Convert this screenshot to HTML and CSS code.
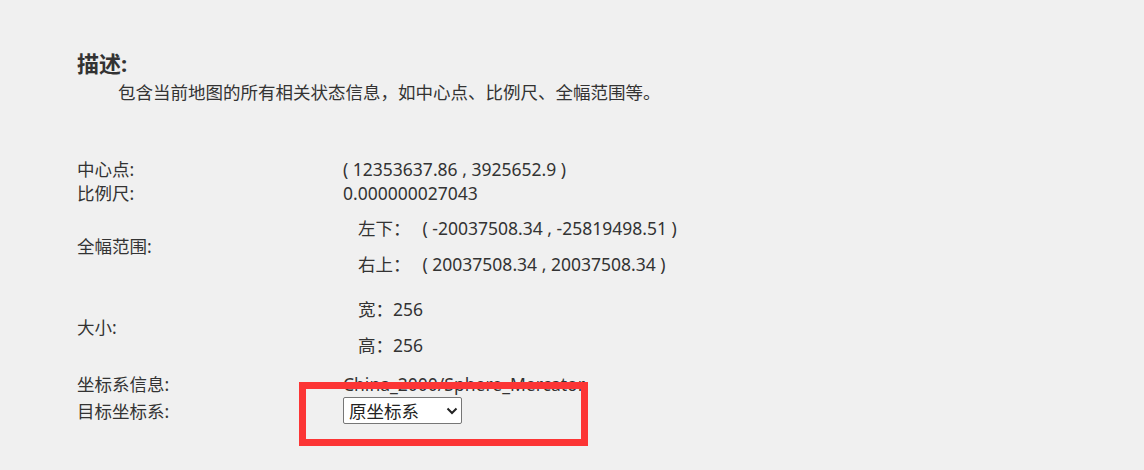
FILE: index.html
```html
<!DOCTYPE html>
<html lang="zh-CN">
  <head>
    <meta charset="utf-8" />
    <title>地图状态</title>
    <link rel="stylesheet" href="styles.css">
  </head>
  <body>
    <div id="container">
      <h3 class="title">描述:</h3>
      <p class="desc">包含当前地图的所有相关状态信息，如中心点、比例尺、全幅范围等。</p>

      <div class="info">
        <div class="row">
          <div class="label">中心点:</div>
          <div class="value">( 12353637.86 , 3925652.9 )</div>
        </div>
        <div class="row">
          <div class="label">比例尺:</div>
          <div class="value">0.000000027043</div>
        </div>
        <div class="row row-tall">
          <div class="label">全幅范围:</div>
          <div class="value">
            <div class="sub">左下：<span class="coord">( -20037508.34 , -25819498.51 )</span></div>
            <div class="sub">右上：<span class="coord">( 20037508.34 , 20037508.34 )</span></div>
          </div>
        </div>
        <div class="row row-tall row-size">
          <div class="label">大小:</div>
          <div class="value">
            <div class="sub">宽：256</div>
            <div class="sub">高：256</div>
          </div>
        </div>
        <div class="row row-prj">
          <div class="label">坐标系信息:</div>
          <div class="value">China_2000/Sphere_Mercator</div>
        </div>
        <div class="row row-target">
          <div class="label">目标坐标系:</div>
          <div class="value">
            <div class="select-wrap">
              <select class="prj-select">
                <option>原坐标系</option>
              </select>
              <svg class="chevron" width="12" height="8" viewBox="0 0 12 8">
                <path d="M1.5 1.5 L6 6 L10.5 1.5" fill="none" stroke="#222" stroke-width="2" />
              </svg>
            </div>
          </div>
        </div>

        <!-- highlight box drawn over the target projection -->
        <div class="highlight"></div>
      </div>
    </div>
  </body>
</html>
```

FILE: styles.css
```css
* {
  box-sizing: border-box;
}

html,
body {
  min-height: 470px;
}

body {
  margin: 0;
  background-color: #f0f0f0;
  color: #333;
  font-family: "Noto Sans", "Noto Sans CJK SC", sans-serif;
  font-size: 17.5px;
}

#container {
  padding: 48px 0 40px 77px;
}

.title {
  margin: 0;
  font-size: 22px;
  line-height: 30px;
  font-weight: bold;
}

.desc {
  margin: 0;
  padding-left: 41px;
  line-height: 28px;
}

.info {
  position: relative;
  margin-top: 51px;
  width: 700px;
}

.row {
  display: flex;
  align-items: center;
  min-height: 24px;
  line-height: 24px;
}

.label {
  width: 266px;
  flex-shrink: 0;
}

.row-tall {
  padding: 5px 0;
}

.row-tall .sub {
  padding-left: 15px;
  line-height: 36px;
}

.coord {
  margin-left: 12px;
}

.row-size {
  padding-top: 4px;
}

.row-prj {
  margin-top: 4px;
}

.row-target {
  padding-top: 1px;
}

.select-wrap {
  position: relative;
  width: 119px;
}

.prj-select {
  appearance: none;
  display: block;
  width: 119px;
  height: 27px;
  margin: 0;
  padding: 0 0 0 5px;
  border: 1px solid #767676;
  border-radius: 2px;
  background-color: #fff;
  color: #222;
  font-family: "Noto Sans CJK SC", sans-serif;
  font-size: 17.5px;
}

.chevron {
  position: absolute;
  right: 4px;
  top: 10px;
  pointer-events: none;
}

.highlight {
  position: absolute;
  left: 222px;
  top: 225px;
  width: 289px;
  height: 64px;
  border: 7px solid #fc3535;
}
```
